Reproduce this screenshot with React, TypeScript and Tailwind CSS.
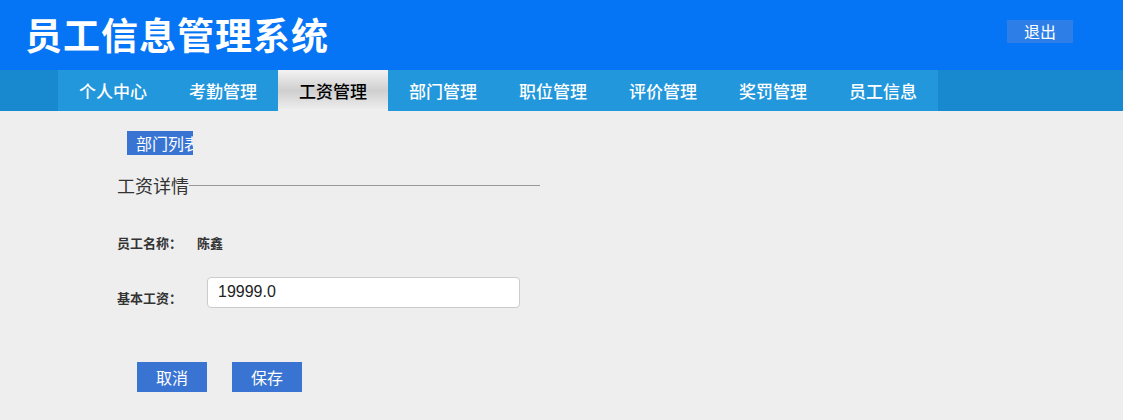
const navItems = ["个人中心", "考勤管理", "工资管理", "部门管理", "职位管理", "评价管理", "奖罚管理", "员工信息"]

function App() {
    const active = "工资管理"

    return (
        <div className="w-[1123px] h-[420px] bg-[#eeeeee] font-['Microsoft_YaHei','Noto_Sans_CJK_SC',sans-serif] overflow-hidden">
            <div className="h-[70px] bg-[#0574f5] flex items-center justify-between pl-[25px] pr-[50px]">
                <h1 className="text-white text-[37px] font-bold tracking-[1px] leading-none pb-[1px]">员工信息管理系统</h1>
                <button className="w-[66px] h-[23px] bg-[#2d7ee6] text-white text-[16px] leading-[23px] -mt-[8px]">退出</button>
            </div>
            <div className="h-[41px] bg-[#1889cf] pl-[58px] flex">
                <div className="flex bg-[#2297db]">
                    {navItems.map((item) => (
                        <div
                            key={item}
                            className={
                                item === active
                                    ? "w-[110px] h-[41px] flex items-center justify-center text-[17px] font-medium text-black bg-gradient-to-b from-[#f3f3f3] via-[#cfcfcf] to-[#f0f0f0]"
                                    : "w-[110px] h-[41px] flex items-center justify-center text-[17px] font-medium text-white"
                            }
                        >
                            {item}
                        </div>
                    ))}
                </div>
            </div>

            <div className="pl-[117px] pt-[20px]">
                <div className="ml-[10px] w-[66px] h-[24px] bg-[#3a74d2] overflow-hidden whitespace-nowrap">
                    <span className="pl-[9px] text-white text-[16px] leading-[24px]">部门列表</span>
                </div>

                <div className="flex items-center mt-[18px] w-[423px]">
                    <span className="text-[18px] text-[#333] leading-[24px]">工资详情</span>
                    <div className="flex-1 h-px bg-[#999]" />
                </div>

                <div className="flex items-center mt-[36px] text-[13px] font-bold text-[#333]">
                    <span className="w-[80px]">员工名称：</span>
                    <span>陈鑫</span>
                </div>

                <div className="flex items-center mt-[24px]">
                    <span className="w-[90px] text-[13px] font-bold text-[#333] pt-[11px]">基本工资：</span>
                    <input
                        defaultValue="19999.0"
                        className="w-[313px] h-[31px] bg-white border border-[#ccc] rounded-[4px] px-[10px] text-[16px] text-[#222] font-['Liberation_Sans',sans-serif] outline-none"
                    />
                </div>

                <div className="flex gap-[25px] mt-[54px] ml-[20px]">
                    <button className="w-[70px] h-[30px] bg-[#3a74d2] text-white text-[16px]">取消</button>
                    <button className="w-[70px] h-[30px] bg-[#3a74d2] text-white text-[16px]">保存</button>
                </div>
            </div>
        </div>
    )
}
export default App
